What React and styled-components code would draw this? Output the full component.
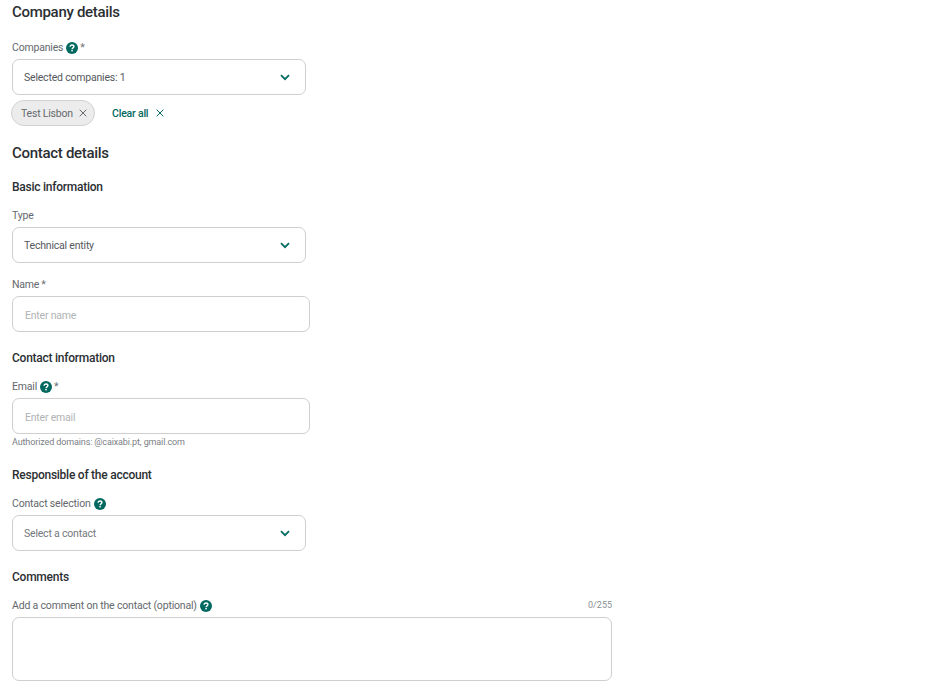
import React from 'react'
import styled, { createGlobalStyle } from 'styled-components'

const GREEN = '#00695f'

const GlobalStyle = createGlobalStyle`
  html, body {
    margin: 0;
    padding: 0;
    background: #ffffff;
    font-family: Roboto, "Liberation Sans", sans-serif;
  }
`

const Page = styled.div`
  padding: 0 12px;
  width: 600px;
  height: 699px;
  overflow: hidden;
`

const Title = styled.h2`
  margin: ${({ $top }) => $top || 0}px 0 0;
  font-size: 15px;
  line-height: 24px;
  font-weight: 500;
  letter-spacing: -0.3px;
  color: #2b2f33;
`

const SubTitle = styled.h3`
  margin: ${({ $top }) => $top}px 0 0;
  font-size: 12px;
  line-height: 18px;
  font-weight: 500;
  letter-spacing: -0.25px;
  color: #2b2f33;
`

const Label = styled.label`
  display: flex;
  align-items: center;
  gap: 3px;
  margin: ${({ $top }) => $top}px 0 3px;
  padding-top: 1px;
  font-size: 10.5px;
  line-height: 16px;
  letter-spacing: -0.18px;
  color: #64686c;
`

const LabelRow = styled.div`
  display: flex;
  justify-content: space-between;
  align-items: center;
`

const Counter = styled.span`
  font-size: 9px;
  line-height: 16px;
  margin-top: 7px;
  color: #8a8f94;
`

const Star = styled.span`
  margin-left: -1px;
  color: #6b6f73;
`

const SelectBox = styled.div`
  box-sizing: border-box;
  display: flex;
  align-items: center;
  justify-content: space-between;
  width: 294px;
  height: 36px;
  padding: 0 15px 0 11px;
  border: 1px solid #cfcfcf;
  border-radius: 7px;
  font-size: 10.5px;
  letter-spacing: -0.2px;
  color: ${({ $muted }) => ($muted ? '#74787c' : '#55585c')};
`

const TextInput = styled.input`
  display: block;
  box-sizing: border-box;
  width: 298px;
  height: 36px;
  padding: 2px 12px 0;
  border: 1px solid #cfcfcf;
  border-radius: 7px;
  outline: none;
  font-family: inherit;
  font-size: 10.5px;
  letter-spacing: -0.2px;
  &::placeholder {
    color: #b0b3b5;
    opacity: 1;
  }
`

const TextArea = styled.textarea`
  display: block;
  box-sizing: border-box;
  width: 600px;
  height: 64px;
  border: 1px solid #cfcfcf;
  border-radius: 7px;
  outline: none;
  resize: none;
`

const Hint = styled.div`
  margin: 2px 0 -1px;
  font-size: 9px;
  line-height: 12px;
  letter-spacing: -0.12px;
  color: #7b8085;
`

const ChipRow = styled.div`
  display: flex;
  align-items: center;
  gap: 17px;
  margin: 5px 0 0 -1px;
`

const Chip = styled.div`
  box-sizing: border-box;
  display: flex;
  align-items: center;
  gap: 6px;
  width: 84px;
  height: 26px;
  padding-left: 9px;
  border: 1px solid #d2d2d2;
  border-radius: 13px;
  background: #ececec;
  font-size: 10.5px;
  letter-spacing: -0.2px;
  color: #66696d;
`

const ClearAll = styled.button`
  display: flex;
  align-items: center;
  gap: 8px;
  padding: 0;
  border: 0;
  background: none;
  font-family: inherit;
  font-size: 10.5px;
  font-weight: 500;
  letter-spacing: -0.2px;
  color: ${GREEN};
`

const HelpIcon = () => (
  <svg width="12" height="12" viewBox="0 0 12 12">
    <circle cx="6" cy="6" r="6" fill={GREEN} />
    <path d="M4.1 4.7c0-1.1.8-1.7 1.9-1.7s1.9.6 1.9 1.6c0 1.3-1.8 1.3-1.8 2.6" fill="none" stroke="#fff" strokeWidth="1.4" />
    <rect x="5.3" y="8" width="1.5" height="1.4" fill="#fff" />
  </svg>
)

const Chevron = () => (
  <svg width="10" height="7" viewBox="0 0 10 7">
    <path d="M1 1.2l4 4 4-4" fill="none" stroke={GREEN} strokeWidth="1.7" />
  </svg>
)

const Cross = ({ color }) => (
  <svg width="8" height="8" viewBox="0 0 8 8">
    <path d="M.7.7l6.6 6.6M7.3.7L.7 7.3" fill="none" stroke={color} strokeWidth="1" />
  </svg>
)

export default function App() {
  return (
    <Page>
      <GlobalStyle />
      <Title>Company details</Title>
      <Label $top={15}>Companies <HelpIcon /> <Star>*</Star></Label>
      <SelectBox>Selected companies: 1 <Chevron /></SelectBox>
      <ChipRow>
        <Chip>Test Lisbon <Cross color="#66696d" /></Chip>
        <ClearAll>Clear all <Cross color={GREEN} /></ClearAll>
      </ChipRow>

      <Title $top={15}>Contact details</Title>
      <SubTitle $top={13}>Basic information</SubTitle>
      <Label $top={11}>Type</Label>
      <SelectBox>Technical entity <Chevron /></SelectBox>
      <Label $top={13}>Name <Star>*</Star></Label>
      <TextInput placeholder="Enter name" />

      <SubTitle $top={17}>Contact information</SubTitle>
      <Label $top={11}>Email <HelpIcon /> <Star>*</Star></Label>
      <TextInput placeholder="Enter email" />
      <Hint>Authorized domains: @caixabi.pt, gmail.com</Hint>

      <SubTitle $top={19}>Responsible of the account</SubTitle>
      <Label $top={11}>Contact selection <HelpIcon /></Label>
      <SelectBox $muted>Select a contact <Chevron /></SelectBox>

      <SubTitle $top={17}>Comments</SubTitle>
      <LabelRow>
        <Label $top={11}>Add a comment on the contact (optional) <HelpIcon /></Label>
        <Counter>0/255</Counter>
      </LabelRow>
      <TextArea />
    </Page>
  )
}
